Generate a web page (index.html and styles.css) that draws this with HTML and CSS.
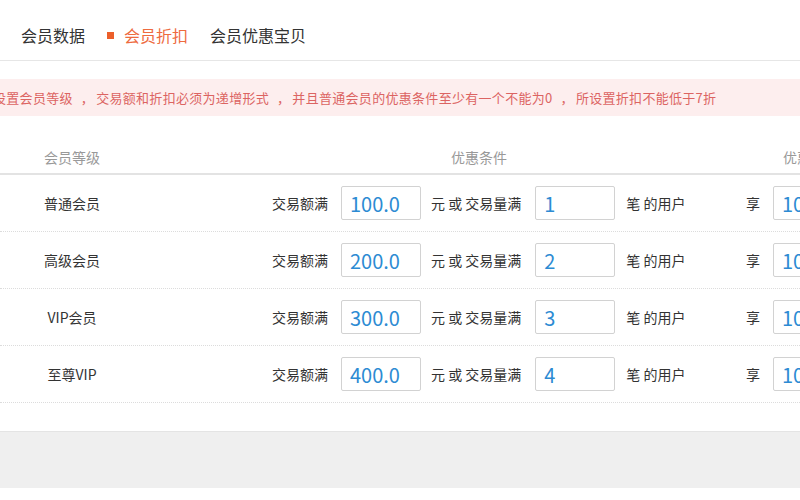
FILE: index.html
```html
<!DOCTYPE html>
<html lang="zh-CN">
<head>
  <meta charset="UTF-8" />
  <meta name="viewport" content="width=device-width, initial-scale=1.0"/>
  <title>会员折扣</title>
  <link rel="stylesheet" href="styles.css">
</head>
<body>
  <div class="page">
    <div class="tabs">
      <span class="tab">会员数据</span>
      <span class="tab active"><i class="dot"></i>会员折扣</span>
      <span class="tab">会员优惠宝贝</span>
    </div>

    <div class="alert">设置会员等级<span class="comma">，</span>交易额和折扣必须为递增形式<span class="comma">，</span>并且普通会员的优惠条件至少有一个不能为0<span class="comma">，</span>所设置折扣不能低于7折</div>

    <div class="grid head">
      <div class="c1">会员等级</div>
      <div class="c2">优惠条件</div>
      <div class="c3">优惠折扣</div>
    </div>

    <div id="rows"></div>

    <div class="footer"></div>
  </div>

  <script>
    const levels = [
      { name: "普通会员", amount: "100.0", count: "1", discount: "10" },
      { name: "高级会员", amount: "200.0", count: "2", discount: "10" },
      { name: "VIP会员", amount: "300.0", count: "3", discount: "10" },
      { name: "至尊VIP", amount: "400.0", count: "4", discount: "10" }
    ];

    const rows = document.getElementById("rows");
    levels.forEach((item) => {
      const row = document.createElement("div");
      row.className = "grid row";
      row.innerHTML = `
        <div class="c1">${item.name}</div>
        <div class="c2">
          <span class="lbl">交易额满</span>
          <input class="num" type="text" value="${item.amount}">
          <span class="lbl">元 或 交易量满</span>
          <input class="num" type="text" value="${item.count}">
          <span class="lbl">笔 的用户</span>
        </div>
        <div class="c3">
          <span class="lbl">享</span>
          <input class="num" type="text" value="${item.discount}">
          <span class="lbl">折</span>
        </div>
      `;
      rows.appendChild(row);
    });
  </script>
</body>
</html>
```

FILE: styles.css
```css
body {
  margin: 0;
  overflow: hidden;
  background: #fff;
  color: #333;
  font-family: "Microsoft YaHei", "Noto Sans CJK SC", sans-serif;
}
.page {
  width: 1000px;
}
.tabs {
  display: flex;
  align-items: center;
  gap: 22px;
  height: 50px;
  padding: 10px 0 0 21px;
  border-bottom: 1px solid #e6e6e6;
  font-size: 16px;
}
.tab {
  display: flex;
  align-items: center;
}
.tab.active {
  color: #ee6b3f;
}
.dot {
  width: 7px;
  height: 7px;
  margin-right: 10px;
  background: #ec5f2a;
}
.alert {
  margin-top: 18px;
  height: 37px;
  line-height: 37px;
  background: #fdeeee;
  color: #dc6462;
  font-size: 13px;
  letter-spacing: 0.3px;
  text-indent: -7px;
  white-space: nowrap;
}
.comma {
  margin: 0 2px 0 8px;
}
.grid {
  display: grid;
  grid-template-columns: 144px 596px 1fr;
  align-items: center;
  font-size: 14px;
}
.head {
  margin-top: 24px;
  height: 33px;
  color: #999;
  border-bottom: 2px solid #e3e3e3;
}
.head .c2 {
  padding-left: 307px;
}
.head .c3 {
  padding-left: 43px;
}
.c1 {
  text-align: center;
}
.row {
  height: 56px;
  border-bottom: 1px dotted #dcdcdc;
}
.row .c2,
.row .c3 {
  display: flex;
  align-items: center;
}
.row .c2 {
  padding-left: 128px;
}
.row .c3 {
  padding-left: 6px;
}
.lbl {
  white-space: nowrap;
}
.num {
  box-sizing: border-box;
  width: 80px;
  height: 34px;
  margin: 0 10px 0 13px;
  padding: 0 8px;
  border: 1px solid #d2d2d2;
  border-radius: 2px;
  color: #2d8bd3;
  font-family: "Microsoft YaHei", "Noto Sans CJK SC", sans-serif;
  font-size: 20px;
  outline: none;
}
.c2 .num + .lbl + .num {
  margin-left: 14px;
  margin-right: 11px;
}
.footer {
  margin-top: 28px;
  height: 56px;
  background: #efefef;
  border-top: 1px solid #e4e4e4;
}
```
